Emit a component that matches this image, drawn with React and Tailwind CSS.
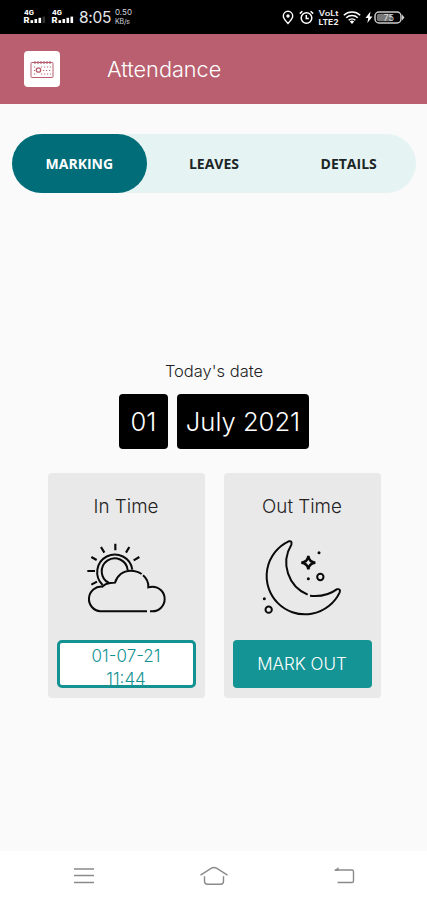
const TABS = ['MARKING', 'LEAVES', 'DETAILS'];

const SignalIcon = ({ bars }) => (
  <svg className="h-[16px] w-[24px]" viewBox="0 0 24 16" fill="#fff">
    <text x="1" y="5.8" fontSize="6" fontWeight="800" fontFamily="Inter, sans-serif" textLength="10" lengthAdjust="spacingAndGlyphs">4G</text>
    <text x="0.5" y="14" fontSize="7" fontWeight="800" fontFamily="Inter, sans-serif" textLength="6" lengthAdjust="spacingAndGlyphs">R</text>
    {[0, 1, 2, 3].map((i) => (
      <rect
        key={i}
        x={7.5 + i * 4}
        y={11.2 - i * 1.2}
        width="2.6"
        height={2.8 + i * 1.2}
        opacity={i < bars ? 1 : 0.2}
      />
    ))}
  </svg>
);

/**
 * StatusBar - phone status bar with signal, clock and system icons
 */
const StatusBar = () => (
  <div className="flex h-[34px] items-center bg-black pr-[22px] pl-[23px] text-white">
    <SignalIcon bars={3} />
    <div className="ml-[4px]">
      <SignalIcon bars={4} />
    </div>
    <span className="ml-[4px] w-[33px] pt-px text-[15.5px] leading-none tracking-[-0.3px] text-gray-200">8:05</span>
    <div className="ml-[3px] w-[20px] text-[8px] leading-[10px] text-gray-300">
      <p>0.50</p>
      <p className="text-[7px] tracking-[-0.2px]">KB/s</p>
    </div>

    <div className="ml-auto flex items-center">
      <svg className="h-[15px] w-[12px]" viewBox="0 0 12 15" fill="none" stroke="#fff" strokeWidth="1.4">
        <path d="M6 13.5C4 11 1.3 8.7 1.3 6a4.7 4.7 0 0 1 9.4 0C10.7 8.7 8 11 6 13.5Z" />
        <circle cx="6" cy="6" r="1" fill="#fff" />
      </svg>
      <svg className="ml-[5px] h-[15px] w-[15px]" viewBox="0 0 15 15" fill="none" stroke="#fff" strokeWidth="1.5">
        <circle cx="7.5" cy="8" r="5.3" />
        <path d="M7.3 5v3.4h2.5M.8 3.6 3.4 1.2M14.2 3.6l-2.6-2.4" />
      </svg>
      <svg className="ml-[4px] h-[20px] w-[22px]" viewBox="0 0 22 20" fill="#eee" fontFamily="Inter, sans-serif" fontWeight="600">
        <text x="0.5" y="8.5" fontSize="7" textLength="20" lengthAdjust="spacingAndGlyphs">VoLt</text>
        <text x="0.5" y="17.5" fontSize="7.4" fontWeight="700" textLength="20" lengthAdjust="spacingAndGlyphs">LTE2</text>
      </svg>
      <svg className="ml-[3px] h-[15px] w-[18px]" viewBox="0 0 18 15" fill="none" stroke="#fff" strokeWidth="1.5">
        <path d="M.8 5.2a12 12 0 0 1 16.4 0M3.2 7.8a8.5 8.5 0 0 1 11.6 0M5.6 10.3a5 5 0 0 1 6.8 0" />
        <path d="M6.8 11.6 9 14l2.2-2.4a3 3 0 0 0-4.4 0Z" fill="#fff" stroke="none" />
      </svg>
      <svg className="ml-[4px] h-[13px] w-[8px]" viewBox="0 0 8 13" fill="#fff">
        <path d="M5.5.5.5 7h2.7l-.8 5L7.5 5.4H4.7Z" />
      </svg>
      <svg className="ml-px h-[13px] w-[31px]" viewBox="0 0 31 13">
        <rect x="1" y="1" width="26" height="11" rx="4" fill="none" stroke="#ccc" strokeWidth="1.5" />
        <rect x="2.8" y="2.8" width="15" height="7.4" rx="2" fill="#777" />
        <path d="M28 3.6 30.5 6.5 28 9.4Z" fill="#ccc" />
        <text x="9.5" y="9.7" fontSize="9" fontFamily="Inter, sans-serif" fill="#ddd">75</text>
      </svg>
    </div>
  </div>
);

const CalendarIcon = () => (
  <svg className="h-[19px] w-[24px]" viewBox="0 0 24 19" fill="none" stroke="#b85f6f" strokeWidth="1">
    <rect x="1" y="2.5" width="22" height="15" rx="0.8" />
    <path d="M5 1v3M8 1v3M11 1v3M14 1v3M17 1v3M20 1v3" strokeWidth="1.1" />
    <circle cx="8.5" cy="10" r="2.2" strokeWidth="1.3" />
    <path d="M4 7h2M11 7h10M4 10.5h2M13 10.5h8M4 14h2M11 14h10" strokeDasharray="1.2 1.8" />
  </svg>
);

const SunCloudIcon = () => (
  <svg
    className="h-[77px] w-[90px]"
    viewBox="123 225 270 231"
    fill="none"
    stroke="#0a0a0a"
    strokeWidth="6"
  >
    {/* Rays */}
    <path
      d="M226 236v20M183 246l10 17M268 246l-10 17M154 276l16 9M298 276l-17 10M142 318h23M154 359l17-9"
      strokeWidth="6.5"
    />
    {/* Sun */}
    <path d="M188 360A53 53 0 1 1 277 314" />
    <path d="M207 354A39 39 0 1 1 263 315" />
    {/* Cloud */}
    <path d="M321 439H181A37 37 0 1 1 187 365Q196 355 211 354L225 353C231 332 249 317 272 317Q291 317 305 327" />
    <path d="M309 331Q326 345 325 367Q331 365 337 365A37 37 0 0 1 337 439H330" />
  </svg>
);

const MoonIcon = () => (
  <svg
    className="h-[82px] w-[90px]"
    viewBox="126 216 270 246"
    fill="none"
    stroke="#0a0a0a"
    strokeWidth="6"
  >
    <path d="M278 389A104 104 0 0 1 229 239Q232 226 221 229A115 115 0 1 0 374 382Q378 370 365 373Q333 397 285 392" />
    {/* Stars */}
    <path d="M280 273Q282 291 301 293Q282 295 280 313Q278 295 259 293Q278 291 280 273Z" strokeWidth="7.5" />
    <circle cx="280" cy="293" r="4" fill="#e9e9e9" stroke="none" />
    <circle cx="316" cy="336" r="9.5" />
    <circle cx="161" cy="434" r="9.5" />
    <g fill="#0a0a0a" stroke="none">
      <circle cx="312" cy="263" r="4.5" />
      <circle cx="280" cy="341" r="4.5" />
      <circle cx="148" cy="401" r="4.5" />
    </g>
  </svg>
);

const TimeCard = ({ title, icon, children }) => (
  <div className="flex h-[225px] w-[157px] flex-col items-center rounded-[4px] bg-[#e9e9e9] px-[9px] pt-[21px] pb-[10px]">
    <h2 className="text-[18.8px] leading-[26px] font-light text-[#222]">{title}</h2>
    <div className="flex flex-1 items-center pb-[4px]">{icon}</div>
    {children}
  </div>
);

const NavBar = () => (
  <div className="flex h-[49px] items-center justify-between bg-white pr-[71px] pl-[72px] text-[#8a8a8a]">
    <svg className="h-[18px] w-[24px]" viewBox="0 0 24 18" fill="none" stroke="currentColor" strokeWidth="1.7">
      <path d="M2 2h20M2 8.5h20M2 15.5h20" />
    </svg>
    <svg className="h-[20px] w-[30px]" viewBox="0 0 30 20" fill="none" stroke="currentColor" strokeWidth="1.4">
      <path d="M1.5 9.2 12.5 2.2Q15 .8 17.5 2.2L28.5 9.2M5.5 10.2v5q0 3 3 3h13q3 0 3-3v-5" />
    </svg>
    <svg className="h-[20px] w-[24px]" viewBox="0 0 24 20" fill="none" stroke="currentColor" strokeWidth="1.4">
      <path d="M3 4h17q1.5 0 1.5 1.5V15q0 1.5-1.5 1.5H5.5" />
      <path d="M2 4.7 6.5 1v3.7Z" fill="currentColor" stroke="none" />
    </svg>
  </div>
);

const App = () => {
  return (
    <div className="flex h-screen w-full flex-col overflow-hidden bg-[#fafafa] font-['Inter',sans-serif]">
      <StatusBar />

      {/* Header */}
      <header className="flex h-[70px] items-center bg-[#b95f6f] pl-[24px]">
        <div className="flex h-[36px] w-[36px] items-center justify-center rounded-[4px] bg-white">
          <CalendarIcon />
        </div>
        <h1 className="ml-[47px] text-[21.7px] font-light text-white">Attendance</h1>
      </header>

      {/* Tabs */}
      <div className="mt-[30px] mr-[11px] ml-[12px] grid h-[59px] shrink-0 grid-cols-3 rounded-full bg-[#e5f4f3]">
        {TABS.map((tab, index) => (
          <button
            key={tab}
            className={`rounded-full font-['Open_Sans',sans-serif] text-[14px] font-bold ${
              index === 0 ? 'bg-[#006d79] text-white' : 'text-[#1c2526]'
            }`}
          >
            {tab}
          </button>
        ))}
      </div>

      <main className="flex flex-1 flex-col items-center pt-[166px] pl-px">
        <p className="text-[16.5px] leading-[24px] font-light text-[#222]">Today's date</p>
        <div className="mt-[11px] flex gap-[9px] text-[25.6px] font-light text-white">
          <div className="flex h-[55px] w-[49px] items-center justify-center rounded-[4px] bg-black pt-px">01</div>
          <div className="flex h-[55px] w-[132px] items-center justify-center rounded-[4px] bg-black pt-px whitespace-nowrap">
            July 2021
          </div>
        </div>

        <div className="mt-[24px] flex gap-[19px]">
          <TimeCard title="In Time" icon={<SunCloudIcon />}>
            <div className="h-[48px] w-full overflow-hidden rounded-[5px] border-[3px] border-[#149292] bg-white pt-[2px] text-center text-[17px] leading-[23px] font-light text-[#149292]">
              <p>01-07-21</p>
              <p>11:44</p>
            </div>
          </TimeCard>
          <TimeCard title="Out Time" icon={<MoonIcon />}>
            <button className="h-[48px] w-full rounded-[4px] bg-[#149494] pt-[2px] text-[17px] font-light text-white">
              MARK OUT
            </button>
          </TimeCard>
        </div>
      </main>

      <NavBar />
    </div>
  );
};

export default App;
